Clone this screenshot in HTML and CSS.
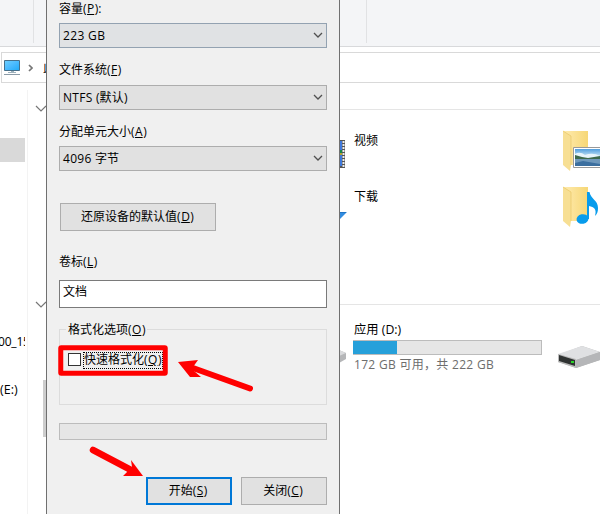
FILE: index.html
```html
<!DOCTYPE html>
<html lang="zh-CN">
<head>
<meta charset="utf-8">
<title>格式化</title>
<link rel="stylesheet" href="styles.css">
</head>
<body>
<div class="desktop">
  <div class="explorer">
    <div class="ribbon"><i class="ribbon-group first"></i><i class="ribbon-group second"></i></div>
    <div class="address">
      <svg class="pc-icon" width="17" height="16" viewBox="0 0 17 16">
        <defs><linearGradient id="screen" x2="1" y2="1"><stop stop-color="#6fd0ff"/><stop offset=".5" stop-color="#4abaff"/><stop offset="1" stop-color="#1eaaf8"/></linearGradient></defs>
        <path d="M.5.5h15v10H.5z" fill="url(#screen)" stroke="#456f8b"/><path d="M7 11h3v1H7zM4 12h8v1H4z" fill="#9eb1bc"/><path d="M0 14.5h16" stroke="#8b9ba7"/>
      </svg>
      <svg class="crumb" width="5" height="8" viewBox="0 0 5 8"><path d="M1 1l3 3-3 3" fill="none" stroke="#777" stroke-width="1.7"/></svg>
      <span class="crumb-text">此</span>
    </div>
    <div class="workspace">
      <nav class="sidebar">
        <div class="selected"></div>
        <div class="nav-name">00_15</div>
        <div class="nav-drive">(E:)</div>
      </nav>
      <div class="gutter">
        <svg class="fold" width="12" height="8" viewBox="0 0 12 8"><path d="M1 1l5 5 5-5" fill="none" stroke="#777" stroke-width="1.2"/></svg>
        <svg class="fold lower" width="12" height="8" viewBox="0 0 12 8"><path d="M1 1l5 5 5-5" fill="none" stroke="#777" stroke-width="1.2"/></svg>
        <i class="scroll"></i>
      </div>
      <main class="files">
        <section class="folders">
          <div class="file-row">
            <svg class="edge" width="8" height="30" viewBox="0 0 8 30"><path d="M0 1h6v28H0z" fill="#555"/><path d="M0 2h3v12H0zM0 16h3v11H0z" fill="#3f79dc"/><path d="M0 11h3v3H0z" fill="#168848"/><path d="M0 14h3v2H0z" fill="#b8a22d"/><path d="M4.5 2v26" stroke="#eee" stroke-width="2" stroke-dasharray="2 1"/></svg>
            <span class="file-name">视频</span>
            <svg class="folder-icon" width="40" height="42" viewBox="0 0 40 42">
              <defs><linearGradient id="fold"><stop stop-color="#ffebb0"/><stop offset="1" stop-color="#f6d776"/></linearGradient><linearGradient id="sky" x2="0" y2="1"><stop stop-color="#4f9ddd"/><stop offset=".5" stop-color="#d9effa"/></linearGradient></defs>
              <path d="M3 1h25v34H9z" fill="url(#fold)"/><path d="M3 1l8 5v29l-1 6-7-6z" fill="#f7df94"/><path d="M3 1l8 5v29" fill="none" stroke="#e8c665" stroke-width=".7"/>
              <path d="M13.5 17.5H43v20H13.5z" fill="#fff" stroke="#999"/><path d="M15 19h25v17H15z" fill="url(#sky)"/><path d="M15 24q5-3 10 1 8-3 15 1v2H15z" fill="#e7f4fb"/><path d="M15 25l7 2 6 1 12-2v3H15z" fill="#3d694c"/><path d="M15 29h25v7H15z" fill="#6f98bb"/><path d="M15 33l8-2 17 3v2H15z" fill="#3c6f9f"/>
            </svg>
          </div>
          <div class="file-row">
            <svg class="edge" width="8" height="30" viewBox="0 0 8 30"><path d="M0 17h8L1 24H0z" fill="#328ce0"/><path d="M0 17.5h7" stroke="#2075c5"/></svg>
            <span class="file-name">下载</span>
            <svg class="folder-icon" width="40" height="42" viewBox="0 0 40 42"><path d="M3 1h25v34H9z" fill="url(#fold)"/><path d="M3 1l8 5v29l-1 6-7-6z" fill="#f7df94"/><path d="M3 1l8 5v29" fill="none" stroke="#e8c665" stroke-width=".7"/><ellipse cx="22.5" cy="33" rx="6" ry="4.8" transform="rotate(-12 22.5 33)" fill="#089cec"/><path d="M27 6h2.5c1 7 8.500 8 8.500 16 0 4-1 6-3 8 2-7-1-9-6-10v13h-2z" fill="#089cec"/></svg>
          </div>
        </section>
        <section class="drives">
          <svg class="drive-edge" width="7" height="14" viewBox="0 0 7 14"><path d="M0 0l7 3v6l-7 4z" fill="#b5b6b8"/><path d="M0 0l7 3-7 3z" fill="#d9dadc"/></svg>
          <div class="drive-info">
            <div class="drive-name">应用 (D:)</div>
            <div class="capacity"><i></i></div>
            <div class="drive-space">172 GB 可用，共 222 GB</div>
          </div>
          <svg class="disk" width="43" height="24" viewBox="0 0 43 24"><path d="M1 10L25 1l18 6v8l-24 8-18-6z" fill="#b4b5b7"/><path d="M1 9L25 1l18 6-24 8z" fill="#dfe0e2"/><path d="M19 15l24-8v8l-24 8z" fill="#b5b6b8"/><path d="M1 9l18 5v9L1 17z" fill="#bbb"/><path d="M2 10l16 5v6L2 16z" fill="#303332"/><path d="M14 16h3v2h-3z" fill="#29d529"/></svg>
        </section>
      </main>
    </div>
  </div>

  <div class="dialog">
    <label class="label capacity-label">容量(<u>P</u>):</label>
    <div class="combo active"><span class="wide">223 GB</span><svg width="10" height="7" viewBox="0 0 10 7"><path d="M1 1l4 4 4-4" /></svg></div>
    <label class="label">文件系统(<u>F</u>)</label>
    <div class="combo"><span><b>NTFS</b> (默认)</span><svg width="10" height="7" viewBox="0 0 10 7"><path d="M1 1l4 4 4-4" /></svg></div>
    <label class="label allocation">分配单元大小(<u>A</u>)</label>
    <div class="combo"><span><b>4096</b> 字节</span><svg width="10" height="7" viewBox="0 0 10 7"><path d="M1 1l4 4 4-4" /></svg></div>
    <button class="button restore">还原设备的默认值(<u>D</u>)</button>
    <label class="label">卷标(<u>L</u>)</label>
    <div class="volume">文档</div>
    <fieldset class="options">
      <legend>格式化选项(<u>O</u>)</legend>
      <div class="quick"><i class="checkbox"></i><span class="focused">快速格式化(<u>Q</u>)</span></div>
    </fieldset>
    <div class="progress"></div>
    <div class="actions"><button class="button primary">开始(<u>S</u>)</button><button class="button">关闭(<u>C</u>)</button></div>
  </div>
  <svg class="annotations" width="600" height="514" viewBox="0 0 600 514">
    <rect x="60.750" y="347.750" width="104.500" height="25.500" rx=".5" fill="none" stroke="red" stroke-width="5" stroke-linejoin="round"/>
    <path d="M250 388.500L193 368" stroke="red" stroke-width="6" stroke-linecap="round"/><path d="M178 362L198 360 193 367 194 371 201 377 190 377z" fill="red"/>
    <path d="M93 450L131 470" stroke="red" stroke-width="6.500" stroke-linecap="round"/><path d="M131 460L143 476 123 476 128 471 132 467z" fill="red"/>
  </svg>
</div>
</body>
</html>
```

FILE: styles.css
```css
* { box-sizing: border-box; }
body { margin: 0; color: #000; font: 12px/16px "Open Sans", "Noto Sans CJK SC", sans-serif; }
svg { display: block; flex: none; }
i { display: block; }
u { margin: 0 .5px; text-underline-offset: 1px; text-decoration-thickness: 1px; }
.desktop { position: relative; width: 600px; height: 514px; overflow: hidden; background: #fff; }
.explorer { width: 600px; height: 514px; }
.ribbon { display: flex; height: 47px; background: #f4f5f7; border-bottom: 1px solid #d8d9db; }
.ribbon-group { width: 1px; height: 43px; background: #e1e2e4; }
.first { margin-left: 33px; }
.second { margin-left: 332px; }
.address { display: flex; height: 31px; margin: 5px 0 0 1px; border: 1px solid #d9d9d9; border-right: 0; }
.pc-icon { margin: 7px 0 0 2px; }
.crumb { margin: 11px 0 0 7px; }
.crumb-text { margin: 7px 0 0 10px; }
.workspace { display: flex; height: 431px; }
.sidebar { width: 28px; height: 424px; margin-top: 7px; border-right: 1px solid #f3f3f3; white-space: nowrap; }
.selected { width: 25px; height: 24px; margin-top: 48px; background: #d9d9d9; }
.nav-name { width: 27px; margin: 172px 0 0 -2px; overflow: hidden; font-size: 12px; letter-spacing: -.2px; }
.nav-drive { margin-top: 32px; font-size: 12.5px; }
.gutter { width: 18px; padding: 22px 0 0 7px; }
.fold.lower { margin-top: 188px; }
.scroll { width: 3px; height: 57px; margin: 71px 0 0 8px; background: #cdcdcd; }
.files { flex: 1; padding-left: 293px; }
.folders { height: 195px; margin-top: 26px; padding-top: 20px; border-top: 1px solid #e5e5e5; }
.file-row { display: flex; height: 56px; }
.edge { margin-top: 9px; }
.file-name { width: 206px; padding: 3px 0 0 7px; }
.folder-icon { margin-left: 7px; }
.drives { display: flex; height: 209px; border-top: 1px solid #e5e5e5; }
.drive-edge { margin-top: 45px; }
.drive-info { width: 189px; margin: 17px 0 0 7px; }
.drive-name { padding-left: 1px; font-size: 12.3px; }
.capacity { height: 15px; margin-top: 2px; border: 1px solid #bcbcbc; background: #e6e6e6; }
.capacity i { width: 44px; height: 13px; margin-left: -1px; background: #26a0da; }
.drive-space { margin-top: 2px; padding-left: 1px; font-size: 12px; letter-spacing: .3px; color: #6d6d6d; white-space: nowrap; }
.disk { margin: 40px 0 0 15px; }
.dialog { position: absolute; top: 0; left: 46px; width: 294px; height: 514px; padding: 1px 12px 0; border: solid #707070; border-width: 0 1px; background: #f0f0f0; }
.label { display: block; height: 16px; margin-top: 14px; }
.label.capacity-label { margin-top: 0; }
.combo { display: flex; align-items: center; justify-content: space-between; width: 268px; height: 25px; margin-top: 7px; padding: 0 3px; border: 1px solid #adadad; background: #e1e1e1; }
.combo.active { margin-top: 6px; border-color: #93a2b1; background: #e0e2e4; }
.combo span { font-size: 12px; letter-spacing: .15px; white-space: pre; }
.combo .wide { letter-spacing: .35px; }
.combo b { font-weight: normal; letter-spacing: .3px; }
.combo path { fill: none; stroke: #505050; stroke-width: 1.3; }
.label.allocation { margin-top: 14px; }
.allocation + .combo { margin-top: 6px; }
.button { height: 28px; padding: 0; border: 1px solid #adadad; background: #e1e1e1; color: #000; font: inherit; }
.restore { display: block; width: 156px; margin: 32px 0 0 1px; padding-right: 1px; }
.restore + .label { margin-top: 23px; }
.volume { width: 268px; height: 28px; margin-top: 10px; padding: 3px; border: 1px solid #7a7a7a; background: #fff; }
.options { display: block; width: 268px; height: 84px; min-width: 0; margin: 13px 0 0; padding: 0 8px; border: 1px solid #dcdcdc; }
.options legend { height: 17px; margin-left: -2px; padding: 1px 2px 0; }
.quick { display: flex; align-items: center; margin-top: 14px; height: 17px; }
.checkbox { width: 13px; height: 13px; margin-top: -2px; border: 1px solid #333; background: #fff; }
.focused { width: 80px; height: 17px; margin-left: 2px; padding-left: 1px; outline: 1px dotted #000; outline-offset: -1px; line-height: 15px; white-space: nowrap; }
.progress { width: 268px; height: 17px; margin-top: 18px; border: 1px solid #bcbcbc; background: #e6e6e6; }
.actions { display: flex; justify-content: flex-end; gap: 9px; width: 268px; margin-top: 37px; }
.actions .button { width: 86px; padding-right: 2px; }
.button.primary { border: 2px solid #0078d7; }
.annotations { position: absolute; inset: 0; pointer-events: none; }
```
